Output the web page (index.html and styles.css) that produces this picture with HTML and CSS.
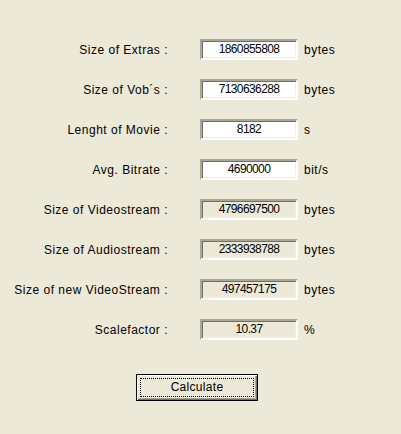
FILE: index.html
```html
<!DOCTYPE html>
<html lang="en">
<head>
    <meta charset="UTF-8">
    <meta name="viewport" content="width=device-width, initial-scale=1.0">
    <title>Scalefactor</title>
    <link rel="stylesheet" href="styles.css">
</head>
<body>
    <div class="form">
        <div class="row">
            <span class="label">Size of Extras :</span>
            <div class="box">1860855808</div>
            <span class="unit">bytes</span>
        </div>
        <div class="row">
            <span class="label">Size of Vob´s :</span>
            <div class="box">7130636288</div>
            <span class="unit">bytes</span>
        </div>
        <div class="row">
            <span class="label">Lenght of Movie :</span>
            <div class="box">8182</div>
            <span class="unit">s</span>
        </div>
        <div class="row">
            <span class="label">Avg. Bitrate :</span>
            <div class="box">4690000</div>
            <span class="unit">bit/s</span>
        </div>
        <div class="row">
            <span class="label">Size of Videostream :</span>
            <div class="box readonly">4796697500</div>
            <span class="unit">bytes</span>
        </div>
        <div class="row">
            <span class="label">Size of Audiostream :</span>
            <div class="box readonly">2333938788</div>
            <span class="unit">bytes</span>
        </div>
        <div class="row">
            <span class="label">Size of new VideoStream :</span>
            <div class="box readonly">497457175</div>
            <span class="unit">bytes</span>
        </div>
        <div class="row">
            <span class="label">Scalefactor :</span>
            <div class="box readonly">10.37</div>
            <span class="unit">%</span>
        </div>
        <button class="calc" type="button"><span class="focus">Calculate</span></button>
    </div>
</body>
</html>
```

FILE: styles.css
```css
*{
    margin: 0;
    padding: 0;
    box-sizing: border-box;
}
body{
    background: #ece9d8;
    font-family: "Liberation Sans", Arial, sans-serif;
    font-size: 12px;
    letter-spacing: 0.5px;
    color: #000;
    height: 100vh;
}
.form{
    padding-top: 39px;
}
.row{
    display: flex;
    align-items: center;
    height: 21px;
    margin-bottom: 19px;
}
.label{
    width: 168px;
    text-align: right;
}
.box{
    width: 98px;
    height: 21px;
    margin-left: 32px;
    background: #fff;
    text-align: center;
    letter-spacing: -0.6px;
    line-height: 17px;
    border: 2px solid;
    border-color: #aca899 #fff #fff #aca899;
    box-shadow: inset 1px 1px 0 #716f64, inset -1px -1px 0 #f1efe2;
}
.readonly{
    background: #ece9d8;
}
.unit{
    margin-left: 6px;
}
.calc{
    display: block;
    margin: 34px 0 0 136px;
    width: 122px;
    height: 27px;
    padding: 3px;
    background: #ece9d8;
    border: 1px solid #000;
    box-shadow: inset 1px 1px 0 #fff, inset -1px -1px 0 #716f64, inset -2px -2px 0 #aca899;
    font-family: "Liberation Sans", Arial, sans-serif;
    font-size: 12px;
    letter-spacing: 0.3px;
    color: #000;
}
.focus{
    display: block;
    height: 19px;
    line-height: 17px;
    border: 1px dotted #000;
}
```
